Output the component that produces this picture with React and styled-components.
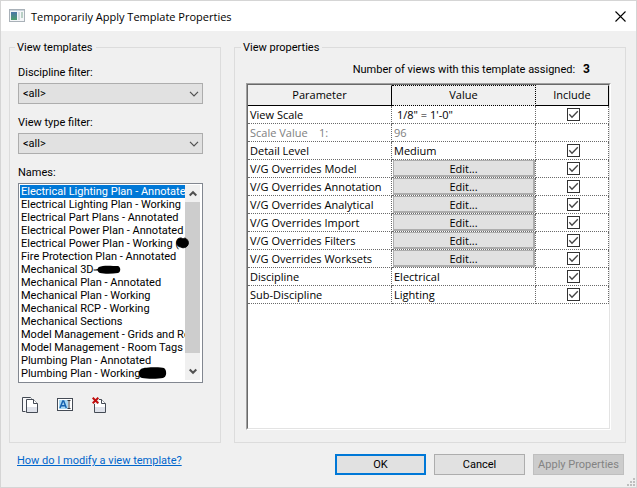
import { useState } from "react";
import styled, { createGlobalStyle, css } from "styled-components";

const dialogFont = `Roboto, "Liberation Sans", sans-serif`;
const tableFont = `"Open Sans", "Noto Sans", sans-serif`;

const GlobalStyle = createGlobalStyle`
  * {
    box-sizing: border-box;
  }

  body {
    margin: 0;
    background: #f0f0f0;
    color: #000;
    font: 11px/13px ${dialogFont};
  }

  button, select, input {
    margin: 0;
    font: inherit;
    color: inherit;
  }
`;

const Dialog = styled.div`
  position: relative;
  display: flex;
  flex-direction: column;
  min-height: 100vh;
  border: 1px solid #d5d5d5;
`;

const TitleBar = styled.header`
  display: flex;
  align-items: center;
  gap: 6px;
  height: 30px;
  padding: 0 8px;
  background: #fff;
`;

const Title = styled.h1`
  flex: 1;
  margin: 0;
  font: 11px/13px ${tableFont};
`;

const CloseButton = styled.button`
  display: flex;
  padding: 2px;
  border: 0;
  background: none;
`;

const Panels = styled.main`
  flex: 1;
  display: grid;
  grid-template-columns: 212px 1fr;
  gap: 13px;
  padding: 10px 10px 0 8px;
`;

const Group = styled.fieldset`
  display: flex;
  flex-direction: column;
  min-width: 0;
  margin: 0;
  padding: ${(props) => props.$padding};
  border: 1px solid #dcdcdc;
`;

const Legend = styled.legend`
  margin-left: ${(props) => props.$indent || 0};
  padding: 0 3px 0 2px;
`;

const Fields = styled.div`
  display: flex;
  flex-direction: column;
  gap: 12px;
`;

const Field = styled.div`
  display: flex;
  flex-direction: column;
  gap: 3px;
  line-height: 14px;
`;

const SelectBox = styled.div`
  display: grid;
  align-items: center;

  > * {
    grid-area: 1 / 1;
  }

  svg {
    justify-self: end;
    margin-right: 4px;
    pointer-events: none;
  }
`;

const Select = styled.select`
  appearance: none;
  height: 21px;
  padding: 0 20px 0 4px;
  border: 1px solid #adadad;
  border-radius: 0;
  background: #e1e1e1;
`;

const ListBox = styled.div`
  position: relative;
  display: flex;
  padding: 1px 2px 2px 1px;
  border: 1px solid #828790;
  background: #fff;
  line-height: 13px;
`;

const List = styled.ul`
  flex: 1;
  min-width: 0;
  margin: 0;
  padding: 0;
  overflow: hidden;
  list-style: none;
`;

const ListItem = styled.li`
  padding-left: 1px;
  white-space: nowrap;
  ${(props) =>
    props.$selected &&
    css`
      background: #0078d7;
      color: #fff;
    `}
`;

const ScrollBar = styled.div`
  display: flex;
  flex-direction: column;
  width: 15px;
  background: #f0f0f0;
`;

const ScrollButton = styled.button`
  display: flex;
  align-items: center;
  justify-content: center;
  height: 17px;
  padding: 0;
  border: 0;
  background: #f0f0f0;
`;

const Thumb = styled.div`
  flex: 1;
  margin-bottom: 10px;
  background: #cdcdcd;
`;

const Redactions = styled.svg`
  position: absolute;
  top: 0;
  left: 0;
  pointer-events: none;
`;

const Tools = styled.div`
  display: flex;
  gap: 18px;
  padding: 14px 4px;
`;

const ToolButton = styled.button`
  display: flex;
  padding: 0;
  border: 0;
  background: none;
`;

const Assigned = styled.p`
  display: flex;
  justify-content: flex-end;
  gap: 8px;
  margin: 0;
  padding: 0 21px 7px 0;
`;

const Count = styled.strong`
  font-size: 12px;
`;

const TableFrame = styled.div`
  flex: 1;
  border: 1px solid;
  border-color: #a0a0a0 #fff #fff #a0a0a0;
`;

const TableInner = styled.div`
  height: 100%;
  border: 1px solid;
  border-color: #696969 #e3e3e3 #e3e3e3 #696969;
  background: #fff;
`;

const Table = styled.table`
  width: 100%;
  border-spacing: 0;
  table-layout: fixed;
  font: 11px/15px ${tableFont};
`;

const HeadCell = styled.th`
  width: ${(props) => props.$width || "auto"};
  height: 21px;
  padding: 0 0 2px;
  border-top: 1px solid #f0f0f0;
  border-right: 1px solid #000;
  border-bottom: 1px solid #000;
  background: #f0f0f0;
  font-weight: 400;
  ${(props) =>
    props.$focused &&
    css`
      border-top: 1px dotted #000;
      border-right-style: dotted;
      border-bottom-style: dotted;
    `}
`;

const Cell = styled.td`
  height: 18px;
  padding: 0 0 0 ${(props) => props.$indent || "2px"};
  border-right: 1px dotted #696969;
  border-bottom: 1px dotted #696969;
  color: ${(props) => (props.$disabled ? "#808080" : "#000")};
  white-space: pre;
`;

const EditButton = styled.button`
  display: block;
  width: 100%;
  height: 17px;
  padding: 0;
  border: 1px solid #adadad;
  border-right-width: 2px;
  border-bottom-width: 2px;
  background: #e1e1e1;
  line-height: 13px;
`;

const CheckBox = styled.span`
  display: grid;
  justify-content: center;
  align-items: center;

  > * {
    grid-area: 1 / 1;
  }

  svg {
    pointer-events: none;
  }

  input:not(:checked) + svg {
    visibility: hidden;
  }
`;

const CheckInput = styled.input`
  appearance: none;
  width: 13px;
  height: 13px;
  border: 1px solid #333;
  background: #fff;
`;

const Footer = styled.footer`
  display: flex;
  align-items: flex-start;
  gap: 8px;
  padding: 11px 12px 12px 16px;
`;

const HelpLink = styled.a`
  margin-right: auto;
  color: #0066cc;
`;

const PushButton = styled.button`
  width: 91px;
  height: 21px;
  padding: 0;
  border: ${(props) => (props.$primary ? "2px solid #0078d7" : "1px solid #adadad")};
  background: #e1e1e1;
  white-space: nowrap;

  &:disabled {
    border-color: #bfbfbf;
    background: #cccccc;
    color: #838383;
  }
`;

const Grip = styled.svg`
  position: absolute;
  right: 1px;
  bottom: 1px;
`;

const names = [
  "Electrical Lighting Plan - Annotated",
  "Electrical Lighting Plan - Working",
  "Electrical Part Plans - Annotated",
  "Electrical Power Plan - Annotated",
  "Electrical Power Plan - Working (",
  "Fire Protection Plan - Annotated",
  "Mechanical 3D -",
  "Mechanical Plan - Annotated",
  "Mechanical Plan - Working",
  "Mechanical RCP - Working",
  "Mechanical Sections",
  "Model Management - Grids and Ro",
  "Model Management - Room Tags",
  "Plumbing Plan - Annotated",
  "Plumbing Plan - Working",
];

const parameters = [
  { name: "View Scale", value: "1/8\" = 1'-0\"", indent: "5px" },
  { name: "Scale Value    1:", value: "96", disabled: true },
  { name: "Detail Level", value: "Medium" },
  { name: "V/G Overrides Model", edit: true },
  { name: "V/G Overrides Annotation", edit: true },
  { name: "V/G Overrides Analytical", edit: true },
  { name: "V/G Overrides Import", edit: true },
  { name: "V/G Overrides Filters", edit: true },
  { name: "V/G Overrides Worksets", edit: true },
  { name: "Discipline", value: "Electrical" },
  { name: "Sub-Discipline", value: "Lighting" },
];

const AppIcon = () => (
  <svg width="16" height="14" viewBox="0 0 16 14">
    <defs>
      <linearGradient id="app" x2="0" y2="1">
        <stop offset="0" stopColor="#4b76a8" />
        <stop offset="1" stopColor="#4d9e6c" />
      </linearGradient>
    </defs>
    <rect x=".5" y=".5" width="15" height="12" fill="#f4f6f8" stroke="#a9b1b8" />
    <path d="M1 1.5h14" stroke="#c9d3dc" />
    <rect x="2" y="3" width="6" height="8" fill="url(#app)" />
    <rect x="9" y="3" width="2" height="8" fill="#d5dde2" />
    <rect x="12" y="3" width="2" height="6" fill="#b9d0c6" />
  </svg>
);

const Chevron = () => (
  <svg width="10" height="6" viewBox="0 0 10 6">
    <path d="M1 .8 5 4.8 9 .8" fill="none" stroke="#505050" strokeWidth="1.2" />
  </svg>
);

const ScrollArrow = ({ down }) => (
  <svg width="8" height="7" viewBox="0 0 8 7">
    <path d={down ? "M.7 1.5 4 4.8 7.3 1.5" : "M.7 5.5 4 2.2 7.3 5.5"} fill="none" stroke="#505050" strokeWidth="2" />
  </svg>
);

const Page = () => (
  <>
    <path d="M.5.5h7l4 4v9H.5z" fill="#fff" stroke="#454b55" />
    <path d="M1 8h10v5H1z" fill="#dfe2ea" />
    <path d="M7.5.5v4h4" fill="#fff" stroke="#454b55" />
  </>
);

const DuplicateIcon = () => (
  <svg width="17" height="17" viewBox="0 0 17 17">
    <path d="M3.5 14.5h-3V.5h8l1 1" fill="#f7f7f9" stroke="#454b55" />
    <g transform="translate(4 2)">
      <Page />
    </g>
  </svg>
);

const RenameIcon = () => (
  <svg width="17" height="17" viewBox="0 0 17 17">
    <rect x=".5" y="1.5" width="15" height="12" fill="#fff" stroke="#454b55" />
    <rect x="2" y="3" width="9" height="9" fill="#a9d8f2" />
    <path d="M3 11 5.8 4h.9l2.6 7M4.4 8.7h4" fill="none" stroke="#1763b0" strokeWidth="1.5" />
    <path d="M10.5 3.5h3M12 3.5v8M10.5 11.5h3" stroke="#30353d" />
  </svg>
);

const DeleteIcon = () => (
  <svg width="15" height="17" viewBox="0 0 15 17">
    <g transform="translate(2 2)">
      <Page />
    </g>
    <path d="M0 0h7v7H0z" fill="#f0f0f0" />
    <path d="M.7.7l5.6 5.6M6.3.7.7 6.3" stroke="#c00d0d" strokeWidth="2" />
  </svg>
);

const Filter = ({ id, label }) => (
  <Field>
    <label htmlFor={id}>{label}</label>
    <SelectBox>
      <Select id={id}>
        <option>&lt;all&gt;</option>
      </Select>
      <Chevron />
    </SelectBox>
  </Field>
);

const Check = ({ label }) => (
  <CheckBox>
    <CheckInput type="checkbox" defaultChecked aria-label={label} />
    <svg width="13" height="13" viewBox="0 0 13 13">
      <path d="M2.3 6.3 5 9.2l5.8-6" fill="none" stroke="#444" strokeWidth="1.3" />
    </svg>
  </CheckBox>
);

const App = () => {
  const [selected, setSelected] = useState(names[0]);

  return (
    <>
      <GlobalStyle />
      <Dialog role="dialog" aria-labelledby="title">
        <TitleBar>
          <AppIcon />
          <Title id="title">Temporarily Apply Template Properties</Title>
          <CloseButton aria-label="Close">
            <svg width="11" height="11" viewBox="0 0 11 11">
              <path d="M.5.5l10 10M10.5.5l-10 10" stroke="#000" strokeWidth="1.1" />
            </svg>
          </CloseButton>
        </TitleBar>

        <Panels>
          <Group $padding="12px 17px 0 8px">
            <Legend $indent="-3px">View templates</Legend>
            <Fields>
              <Filter id="discipline" label="Discipline filter:" />
              <Filter id="viewType" label="View type filter:" />
              <Field>
                <span id="names">Names:</span>
                <ListBox>
                  <List role="listbox" aria-labelledby="names">
                    {names.map((name) => (
                      <ListItem
                        key={name}
                        role="option"
                        aria-selected={name === selected}
                        $selected={name === selected}
                        onClick={() => setSelected(name)}
                      >
                        {name}
                      </ListItem>
                    ))}
                  </List>
                  <ScrollBar>
                    <ScrollButton aria-label="Scroll up">
                      <ScrollArrow />
                    </ScrollButton>
                    <Thumb />
                    <ScrollButton aria-label="Scroll down">
                      <ScrollArrow down />
                    </ScrollButton>
                  </ScrollBar>
                  <Redactions width="183" height="198">
                    <path
                      d="M158 57c1-3 4-4 6-2 2-2 4 0 5 2 1 2 0 5-2 6-2 1-4 1-5 0-3 0-5-3-4-6z"
                      stroke="#000"
                    />
                    <path d="M75 86h6" fill="none" stroke="#000" strokeLinecap="round" />
                    <path d="M80 83c4-2 13-1 19-1 3 1 3 6 0 7-6 1-14 1-18 0-3-1-3-5-1-6z" />
                    <path d="M122 185c3-2 20-2 23-1 3 2 3 9-1 10-5 1-16 1-21 0-4-1-4-7-1-9z" />
                  </Redactions>
                </ListBox>
              </Field>
            </Fields>
            <Tools>
              <ToolButton aria-label="Duplicate">
                <DuplicateIcon />
              </ToolButton>
              <ToolButton aria-label="Rename">
                <RenameIcon />
              </ToolButton>
              <ToolButton aria-label="Delete">
                <DeleteIcon />
              </ToolButton>
            </Tools>
          </Group>

          <Group $padding="9px 14px 12px 11px">
            <Legend $indent="-5px">View properties</Legend>
            <Assigned>
              Number of views with this template assigned:
              <Count>3</Count>
            </Assigned>
            <TableFrame>
              <TableInner>
                <Table>
                  <thead>
                    <tr>
                      <HeadCell $width="144px">Parameter</HeadCell>
                      <HeadCell $focused>Value</HeadCell>
                      <HeadCell $width="73px">Include</HeadCell>
                    </tr>
                  </thead>
                  <tbody>
                    {parameters.map(({ name, value, edit, disabled, indent }) => (
                      <tr key={name}>
                        <Cell $disabled={disabled}>{name}</Cell>
                        <Cell $disabled={disabled} $indent={edit ? "1px" : indent}>
                          {edit ? <EditButton>Edit...</EditButton> : value}
                        </Cell>
                        <Cell>{!disabled && <Check label={`Include ${name}`} />}</Cell>
                      </tr>
                    ))}
                  </tbody>
                </Table>
              </TableInner>
            </TableFrame>
          </Group>
        </Panels>

        <Footer>
          <HelpLink href="#help">How do I modify a view template?</HelpLink>
          <PushButton $primary>OK</PushButton>
          <PushButton>Cancel</PushButton>
          <PushButton disabled>Apply Properties</PushButton>
        </Footer>
        <Grip width="8" height="8" viewBox="0 0 8 8" fill="#bfbfbf">
          <path d="M6 0h2v2H6zM3 3h2v2H3zM6 3h2v2H6zM0 6h2v2H0zM3 6h2v2H3zM6 6h2v2H6z" />
        </Grip>
      </Dialog>
    </>
  );
};

export default App;
